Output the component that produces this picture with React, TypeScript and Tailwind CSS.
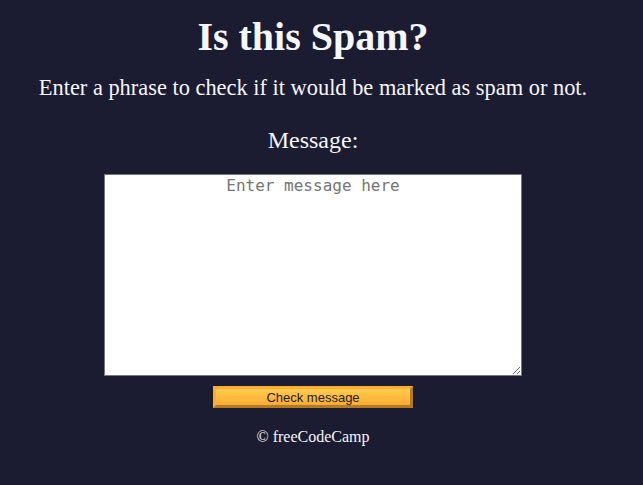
export default function App() {
  return (
    <div className="min-h-[485px] bg-[#1b1b32] text-center text-[#f5f6f7] font-['Liberation_Serif',serif] pt-[12px] pr-[17px]">
      <h1 className="text-[40px] font-bold leading-[50px]">Is this Spam?</h1>
      <p className="mt-[14px] text-[22.4px] leading-[24px]">
        Enter a phrase to check if it would be marked as spam or not.
      </p>
      <div className="mt-[28px] flex flex-col items-center">
        <label htmlFor="message-input" className="text-[24px] leading-[24px]">
          Message:
        </label>
        <textarea
          id="message-input"
          placeholder="Enter message here"
          className="mt-[22px] w-[418px] h-[202px] bg-white border border-[#767676] text-center text-[16px] text-black font-['DejaVu_Sans_Mono',monospace] placeholder:text-[#757575] leading-[20px] pt-[1px]"
        />
        <button className="mt-[10px] w-[200px] h-[22px] text-[13px] leading-none text-[#1b1b32] font-['Liberation_Sans',sans-serif] bg-[#feac32] bg-gradient-to-b from-[#fecc4c] to-[#ffac33] border-[3px] border-t-[#feac32] border-l-[#feac32] border-b-[#b27a24] border-r-[#b27a24]">
          Check message
        </button>
      </div>
      <footer className="mt-[20px] text-[16px] leading-[18px]">© freeCodeCamp</footer>
    </div>
  );
}
